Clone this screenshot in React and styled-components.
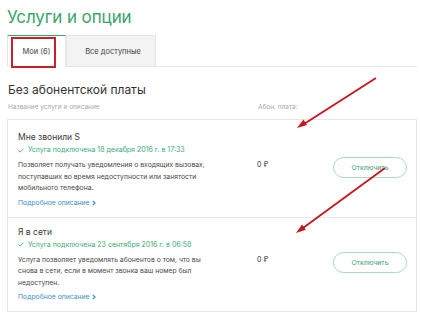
import React from "react";
import styled, { createGlobalStyle } from "styled-components";

const Global = createGlobalStyle`
  html, body { margin: 0; padding: 0; background: #fff; }
  body { font-family: Inter, "Noto Sans", sans-serif; color: #333; width: 421px; height: 320px; overflow: hidden; }
  * { box-sizing: border-box; }
`;

const Page = styled.div`
  position: relative;
  width: 421px;
  height: 320px;
  padding: 0 4px 0 7px;
  display: flex;
  flex-direction: column;
`;

const Title = styled.h1`
  margin: 0;
  font-size: 17px;
  font-weight: 400;
  line-height: 34px;
  height: 35px;
  color: #3aa56a;
  letter-spacing: -0.1px;
`;

const TabBar = styled.div`
  display: flex;
  height: 32px;
  border-bottom: 1px solid #e8e8e8;
`;

const Tab = styled.div`
  position: relative;
  display: flex;
  align-items: center;
  justify-content: center;
  width: ${(p) => p.$w}px;
  height: 32px;
  font-size: 7.5px;
  color: #444;
  background: ${(p) => (p.$active ? "#fff" : "#f3f3f3")};
  border: 1px solid #e6e6e6;
  border-top: ${(p) => (p.$active ? "1px solid #3aa56a" : "1px solid #e6e6e6")};
  border-bottom: ${(p) => (p.$active ? "1px solid #fff" : "1px solid #e6e6e6")};
  margin-bottom: -1px;
  padding-left: ${(p) => (p.$active ? "0" : "4px")};
`;

const Highlight = styled.div`
  position: absolute;
  left: 3px;
  top: 1px;
  width: 45px;
  height: 31px;
  border: 2px solid #c8202d;
  pointer-events: none;
`;

const Heading = styled.h2`
  margin: 13px 0 0 1px;
  font-size: 12px;
  font-weight: 400;
  line-height: 20px;
  color: #333;
`;

const Columns = styled.div`
  display: grid;
  grid-template-columns: 250px 1fr;
  margin-top: 1px;
  padding-left: 1px;
  font-size: 6.5px;
  line-height: 12px;
  color: #a8a8a8;
`;

const Card = styled.div`
  margin-top: 6px;
  border: 1px solid #e6e6e6;
  border-bottom: none;
  padding-top: 3px;
`;

const Item = styled.div`
  padding: 8px 10px 9px 10px;
  border-bottom: 1px solid #e8e8e8;
`;

const ItemTitle = styled.div`
  font-size: 8.5px;
  line-height: 12px;
  color: #3a3a3a;
`;

const Status = styled.div`
  display: flex;
  align-items: center;
  gap: 4px;
  margin-top: 2px;
  font-size: 7px;
  line-height: 10px;
  color: #3aab74;
`;

const Row = styled.div`
  display: grid;
  grid-template-columns: 239px 76px 74px;
  align-items: start;
  margin-top: 4px;
`;

const Desc = styled.div`
  font-size: 6.8px;
  line-height: 11.5px;
  color: #4a4a4a;
`;

const Price = styled.div`
  font-size: 7px;
  line-height: 11.5px;
  color: #333;
`;

const OffButton = styled.button`
  width: 74px;
  height: 21px;
  margin-top: -2px;
  border: 1px solid #a9d9bf;
  border-radius: 11px;
  background: #fff;
  color: #3a9e6e;
  font-family: inherit;
  font-size: 6.8px;
  padding: 0;
`;

const More = styled.a`
  display: flex;
  align-items: center;
  gap: 3px;
  margin-top: 4px;
  font-size: 6.8px;
  line-height: 10px;
  color: #3f8fc0;
  text-decoration: none;
`;

const Arrows = styled.svg`
  position: absolute;
  left: 0;
  top: 0;
  pointer-events: none;
`;

const Check = () => (
  <svg width="6" height="5" viewBox="0 0 6 5">
    <path d="M0.6 2.6 L2.2 4.1 L5.4 0.7" fill="none" stroke="#3aab74" strokeWidth="0.9" />
  </svg>
);

const Chevron = () => (
  <svg width="4" height="6" viewBox="0 0 4 6">
    <path d="M0.8 0.8 L3 3 L0.8 5.2" fill="none" stroke="#3f8fc0" strokeWidth="1.2" />
  </svg>
);

const services = [
  {
    name: "Мне звонили S",
    date: "Услуга подключена 18 декабря 2016 г. в 17:33",
    desc: [
      "Позволяет получать уведомления о входящих вызовах,",
      "поступавших во время недоступности или занятости",
      "мобильного телефона.",
    ],
  },
  {
    name: "Я в сети",
    date: "Услуга подключена 23 сентября 2016 г. в 06:58",
    desc: [
      "Услуга позволяет уведомлять абонентов о том, что вы",
      "снова в сети, если в момент звонка ваш номер был",
      "недоступен.",
    ],
  },
];

export default function App() {
  return (
    <>
      <Global />
      <Page>
        <Title>Услуги и опции</Title>
        <TabBar>
          <Tab $active $w={59}>
            Мои (6)
            <Highlight />
          </Tab>
          <Tab $w={90}>Все доступные</Tab>
        </TabBar>
        <Heading>Без абонентской платы</Heading>
        <Columns>
          <span>Название услуги и описание</span>
          <span>Абон. плата:</span>
        </Columns>
        <Card>
          {services.map((s) => (
            <Item key={s.name}>
              <ItemTitle>{s.name}</ItemTitle>
              <Status>
                <Check />
                {s.date}
              </Status>
              <Row>
                <Desc>
                  {s.desc.map((l, i) => (
                    <div key={i}>{l}</div>
                  ))}
                </Desc>
                <Price>0 ₽</Price>
                <OffButton>Отключить</OffButton>
              </Row>
              <More href="#">
                Подробное описание
                <Chevron />
              </More>
            </Item>
          ))}
        </Card>
        <Arrows width="421" height="320" viewBox="0 0 421 320">
          <g stroke="#c4161c" strokeWidth="1.8" fill="#c4161c">
            <line x1="376" y1="78" x2="304" y2="124" />
            <polygon points="297,128 303.5,119.5 307,125" stroke="none" />
            <line x1="385" y1="168" x2="303" y2="228" />
            <polygon points="296,233 302,224.5 305.8,229.8" stroke="none" />
          </g>
        </Arrows>
      </Page>
    </>
  );
}
